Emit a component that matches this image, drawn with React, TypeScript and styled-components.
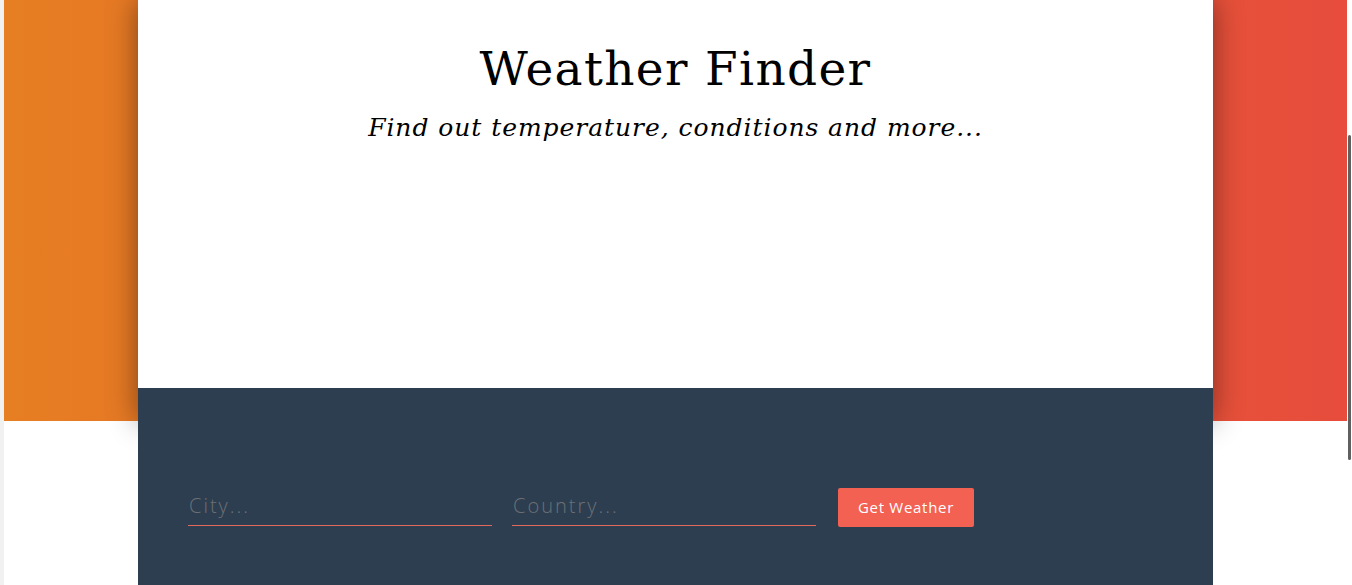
import styled, { createGlobalStyle } from 'styled-components';

const GlobalStyle = createGlobalStyle`
  html, body {
    margin: 0;
    padding: 0;
    background: #fff;
    overflow: hidden;
  }
  * {
    box-sizing: border-box;
  }
`;

const Page = styled.div`
  border-left: 4px solid #f1f1f1;
  padding-right: 5px;
  min-height: 585px;
`;

const Wrapper = styled.div`
  height: 421px;
  background: linear-gradient(to right, #e67e22, #e74c3c);
`;

const Main = styled.div`
  width: 1075px;
  height: 421px;
  margin: 0 auto;
  background: #fff;
  box-shadow: 0 0 28px rgba(0, 0, 0, 0.45);
`;

const TitleArea = styled.div`
  height: 388px;
  padding-top: 38px;
  text-align: center;
  color: #000;
`;

const Title = styled.h1`
  margin: 0;
  font-family: 'DejaVu Serif', 'Liberation Serif', serif;
  font-weight: 400;
  font-size: 47px;
  letter-spacing: 1.35px;
  line-height: 1.3;
`;

const Subtitle = styled.h3`
  margin: 10px 0 0;
  font-family: 'DejaVu Serif', 'Liberation Serif', serif;
  font-style: italic;
  font-weight: 400;
  font-size: 25px;
  letter-spacing: 0.95px;
  line-height: 1.5;
`;

const FormArea = styled.div`
  height: 420px;
  background: #2c3e50;
  padding: 100px 0 0 50px;
`;

const Form = styled.form`
  display: flex;
  align-items: flex-start;
`;

const Input = styled.input`
  width: 304px;
  margin-right: 20px;
  padding: 4px 1px 6px;
  background: transparent;
  border: 0;
  border-bottom: 1px solid #e0685c;
  outline: none;
  color: #fff;
  font-family: 'Open Sans', 'Liberation Sans', sans-serif;
  font-weight: 300;
  font-size: 20px;
  line-height: 27px;
  letter-spacing: 2px;

  &::placeholder {
    color: #6c7075;
  }
`;

const Button = styled.button`
  margin: 0 2px;
  padding: 9px 20px;
  border: 0;
  border-radius: 2px;
  background: #f26152;
  color: #fff;
  font-family: 'Open Sans', 'Liberation Sans', sans-serif;
  font-weight: 400;
  font-size: 15px;
  line-height: 21px;
  letter-spacing: 0.7px;
  cursor: pointer;
`;

const ScrollThumb = styled.div`
  position: fixed;
  top: 135px;
  right: 1px;
  width: 3px;
  height: 325px;
  border-radius: 2px;
  background: #606060;
`;

const App = () => {
  return (
    <>
      <GlobalStyle />
      <Page>
        <Wrapper>
          <Main>
            <TitleArea>
              <Title>Weather Finder</Title>
              <Subtitle>Find out temperature, conditions and more...</Subtitle>
            </TitleArea>
            <FormArea>
              <Form onSubmit={(e) => e.preventDefault()}>
                <Input type="text" name="city" placeholder="City..." />
                <Input type="text" name="country" placeholder="Country..." />
                <Button>Get Weather</Button>
              </Form>
            </FormArea>
          </Main>
        </Wrapper>
      </Page>
      <ScrollThumb />
    </>
  );
};

export default App;
